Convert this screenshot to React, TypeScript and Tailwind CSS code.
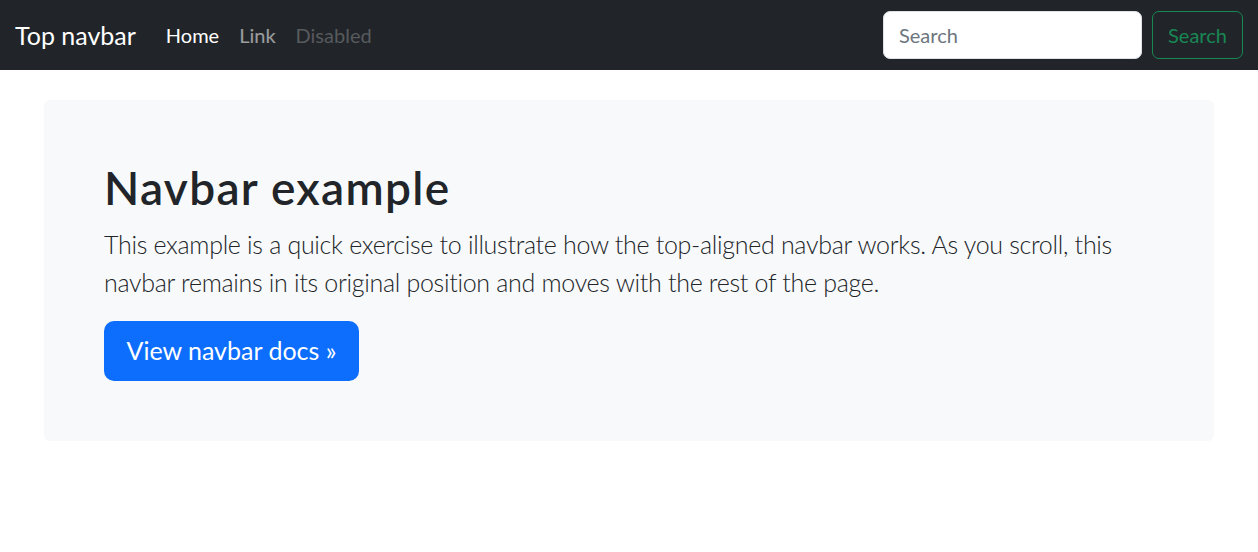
export default function App() {
  return (
    <div className="min-h-[552px] bg-white text-[#212529]" style={{ fontFamily: 'Lato, "Noto Sans", sans-serif' }}>
      <nav className="flex h-[70px] items-center justify-between bg-[#212529] px-[15px]">
        <div className="flex items-center">
          <a className="mr-[20px] text-[25px] leading-[37px] text-white">Top navbar</a>
          <ul className="flex items-center text-[20px] leading-[30px]">
            <li className="px-[10px] text-white">Home</li>
            <li className="px-[10px] text-white/55">Link</li>
            <li className="px-[10px] text-white/25">Disabled</li>
          </ul>
        </div>
        <form className="flex items-center">
          <input
            placeholder="Search"
            className="mr-[10px] h-[48px] w-[259px] rounded-[7px] border border-[#dee2e6] bg-white px-[15px] text-[20px] text-[#212529] placeholder:text-[#6c757d] outline-none"
          />
          <button type="button" className="h-[48px] w-[91px] rounded-[7px] border border-[#198754] text-[20px] text-[#198754]">
            Search
          </button>
        </form>
      </nav>
      <main className="mx-auto mt-[30px] w-[1170px]">
        <div className="rounded-[6px] bg-[#f8f9fa] p-[60px]">
          <h1 className="mb-[10px] text-[46px] font-semibold leading-[56px] tracking-[1.3px]">Navbar example</h1>
          <p className="mb-[20px] text-[25px] font-light leading-[37.5px] tracking-[-0.3px]">
            This example is a quick exercise to illustrate how the top-aligned navbar works. As you scroll, this navbar remains in its original position and moves with the rest of the page.
          </p>
          <button type="button" className="h-[60px] w-[255px] rounded-[10px] bg-[#0d6efd] text-[25px] text-white">
            View navbar docs »
          </button>
        </div>
      </main>
    </div>
  );
}
